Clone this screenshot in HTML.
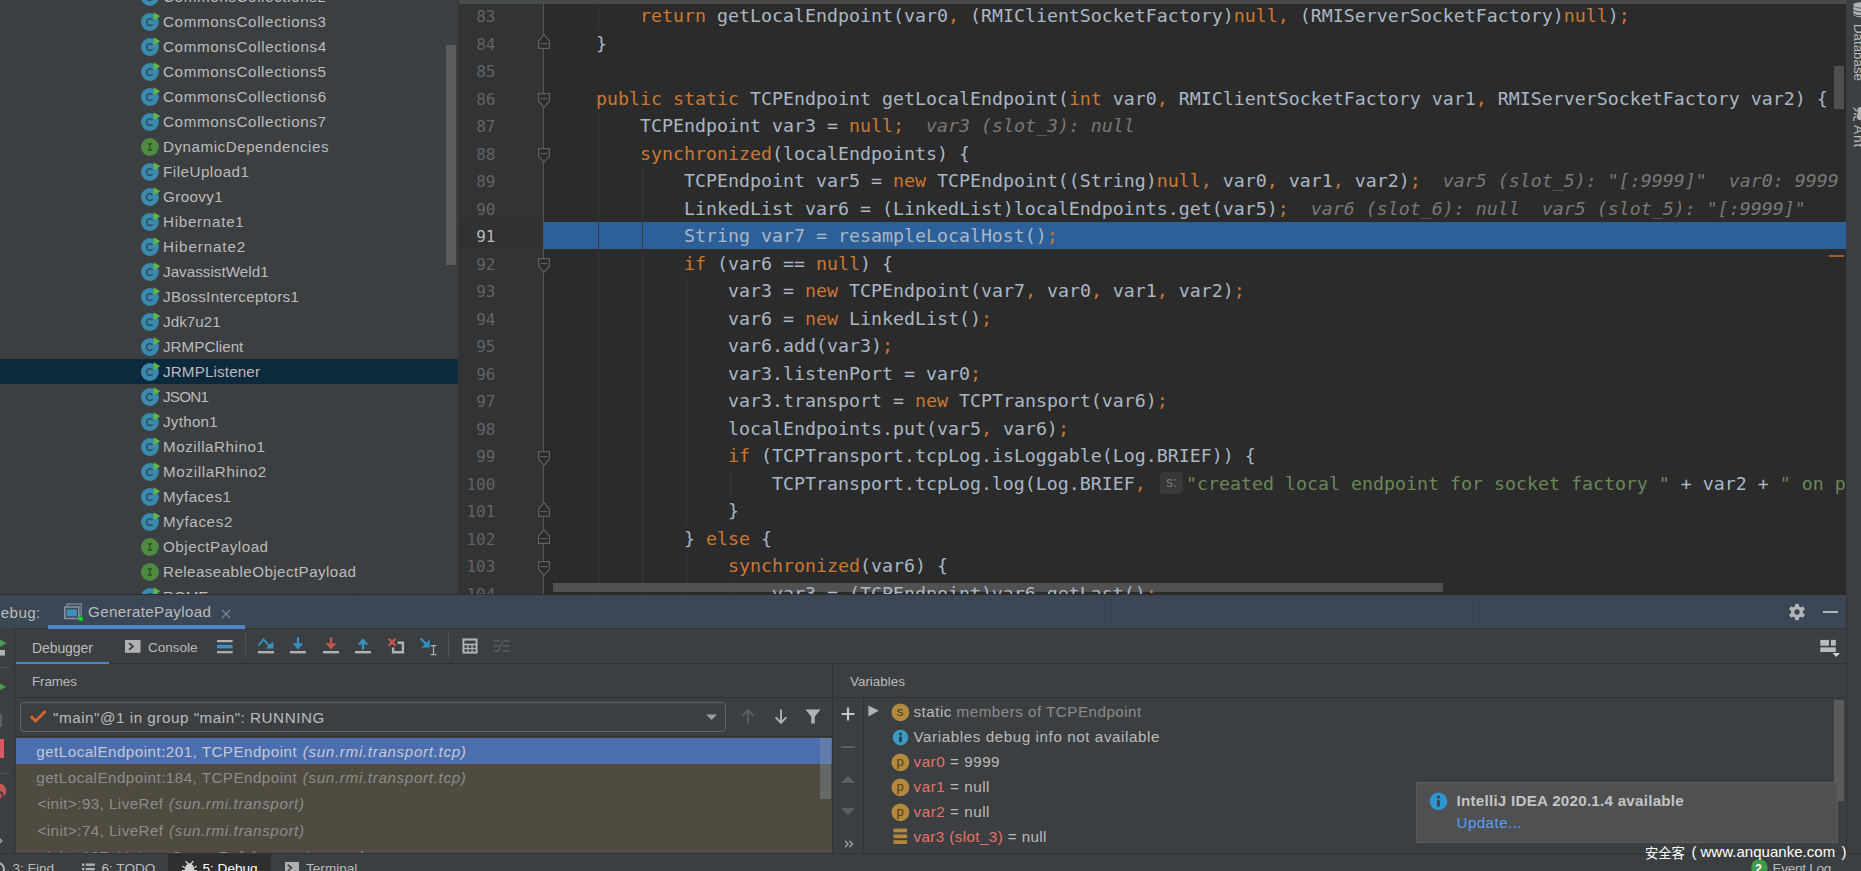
<!DOCTYPE html>
<html><head><meta charset="utf-8"><title>IntelliJ IDEA Debug</title>
<style>
*{box-sizing:border-box;margin:0;padding:0}
html,body{width:1861px;height:871px;overflow:hidden;background:#3c3f41}
body{position:relative;font-family:"Liberation Sans","Noto Sans CJK SC",sans-serif;font-size:15.2px;color:#bbbbbb;-webkit-font-smoothing:antialiased}
.abs{position:absolute}
/* ---------- project tree */
#tree{position:absolute;left:0;top:0;width:458px;height:594px;overflow:hidden;background:#3c3f41}
.tr{position:absolute;left:0;width:458px;height:25px;line-height:25px;white-space:nowrap}
.tr.sel{background:#0d293e}
.tr span{position:absolute;left:163px;top:0.3px;font-size:15.2px}
.ti{position:absolute;left:140px;top:2px}
#tsb{position:absolute;left:446px;top:45px;width:10px;height:220px;background:#595b5d}
/* ---------- editor */
#ed{position:absolute;left:458px;top:0;width:1388px;height:594px;overflow:hidden;background:#2b2b2b}
#gut{position:absolute;left:0;top:0;width:85px;height:594px;background:#313335}
#gline{position:absolute;left:85px;top:0;width:1.3px;height:594px;background:#555555}
#topstrip{position:absolute;left:1px;top:0;width:1387px;height:4px;background:#474b4c;z-index:5}
.cl,.ln,.ih{font-family:"DejaVu Sans Mono","Liberation Mono",monospace;font-size:18.27px}
.cl{position:absolute;left:94px;height:27.5px;line-height:27.5px;white-space:pre;color:#a9b7c6;padding-top:0;z-index:3}
.ln{position:absolute;left:0;width:37.4px;text-align:right;height:27.5px;line-height:27.5px;color:#606366;font-size:16px;padding-top:1px}
.ln.cur{color:#b8b8b8}
.k{color:#cc7832}.s{color:#6a8759}
.ih{color:#787878;font-style:italic}
.exec{position:absolute;left:86px;width:1302px;height:27px;background:#2d6099}
.ig{position:absolute;width:1px;background:#373737;z-index:0}
.fm{position:absolute}
.hint{position:absolute;height:22px;width:23px;border-radius:4px;background:#393939;color:#787878;font-family:"Liberation Sans","Noto Sans CJK SC",sans-serif;font-size:14px;line-height:21px;text-align:center}
#vsb{position:absolute;left:1376px;top:66px;width:10px;height:43px;background:#4f4f4f}
#hsb{position:absolute;left:95px;top:583px;width:890px;height:9px;background:rgba(120,120,120,.5);z-index:1}
#emark{position:absolute;left:1371px;top:255px;width:15px;height:2px;background:#9e5b33}
/* ---------- right strip */
#rs{position:absolute;left:1846px;top:0;width:15px;height:853px;background:#3c3f41;overflow:hidden}
.vt{position:absolute;left:7px;transform-origin:0 0;transform:rotate(90deg);white-space:nowrap;font-size:13.5px;color:#bbbbbb}
/* ---------- debug */
#dh{position:absolute;left:0;top:594px;width:1846px;height:35px;background:#3b4754;border-top:1px solid #2b2b2b;border-bottom:1px solid #323436}
#dtb{position:absolute;left:0;top:628px;width:1846px;height:36px;border-bottom:1px solid #323232}
#lstrip{position:absolute;left:0;top:628px;width:15px;height:225px;border-right:1px solid #2f3133;overflow:hidden;background:#3c3f41;z-index:4}
.sm{font-size:13.6px}
.hline{position:absolute;height:1px;background:#323232}
.vline{position:absolute;width:1px;background:#323232}
#frames{position:absolute;left:16px;top:738px;width:816px;height:115px;background:#4f4b41;overflow:hidden}
.fr{position:absolute;left:0;width:816px;height:26.25px;line-height:26px;white-space:nowrap;color:#8c8c8c;font-size:15.2px}
.fr.sel{background:#4b6eaf;color:#c3cad6}
.fr span{position:absolute;left:20.3px;top:0.8px}
.fr i{margin-left:1px}
.vr{position:absolute;left:864px;width:960px;height:25px;line-height:25px;white-space:nowrap;font-size:15.2px}
.vr span.t{position:absolute;left:49.5px;top:0.3px}
.vn{color:#e6726b}
.dim{color:#8c8c8c}
#note{position:absolute;left:1416px;top:782px;width:422px;height:61px;background:#4e5052;border:1px solid #5a5c5e}
#bs{position:absolute;left:0;top:853px;width:1861px;height:18px;background:#3c3f41;border-top:1px solid #323232;overflow:hidden}
#bs .t{position:absolute;top:6.6px;font-size:13.6px;line-height:16px;white-space:nowrap;color:#bbbbbb}
</style></head><body>

<div id="tree">
<div class="tr" style="top:-16px"><svg class="ti" width="22" height="20" viewBox="0 0 22 20"><circle cx="9.9" cy="11" r="8.9" fill="#3b8aad"/><path d="M12.5 9.2 A3.3 3.3 0 1 0 12.5 13.1" fill="none" stroke="#2c4d60" stroke-width="1.5"/><path d="M13.7 1.3 L20.3 5.3 L13.7 9.3 Z" fill="#5fb83f"/></svg><span style="letter-spacing:0.612px">CommonsCollections2</span></div>
<div class="tr" style="top:9px"><svg class="ti" width="22" height="20" viewBox="0 0 22 20"><circle cx="9.9" cy="11" r="8.9" fill="#3b8aad"/><path d="M12.5 9.2 A3.3 3.3 0 1 0 12.5 13.1" fill="none" stroke="#2c4d60" stroke-width="1.5"/><path d="M13.7 1.3 L20.3 5.3 L13.7 9.3 Z" fill="#5fb83f"/></svg><span style="letter-spacing:0.612px">CommonsCollections3</span></div>
<div class="tr" style="top:34px"><svg class="ti" width="22" height="20" viewBox="0 0 22 20"><circle cx="9.9" cy="11" r="8.9" fill="#3b8aad"/><path d="M12.5 9.2 A3.3 3.3 0 1 0 12.5 13.1" fill="none" stroke="#2c4d60" stroke-width="1.5"/><path d="M13.7 1.3 L20.3 5.3 L13.7 9.3 Z" fill="#5fb83f"/></svg><span style="letter-spacing:0.623px">CommonsCollections4</span></div>
<div class="tr" style="top:59px"><svg class="ti" width="22" height="20" viewBox="0 0 22 20"><circle cx="9.9" cy="11" r="8.9" fill="#3b8aad"/><path d="M12.5 9.2 A3.3 3.3 0 1 0 12.5 13.1" fill="none" stroke="#2c4d60" stroke-width="1.5"/><path d="M13.7 1.3 L20.3 5.3 L13.7 9.3 Z" fill="#5fb83f"/></svg><span style="letter-spacing:0.612px">CommonsCollections5</span></div>
<div class="tr" style="top:84px"><svg class="ti" width="22" height="20" viewBox="0 0 22 20"><circle cx="9.9" cy="11" r="8.9" fill="#3b8aad"/><path d="M12.5 9.2 A3.3 3.3 0 1 0 12.5 13.1" fill="none" stroke="#2c4d60" stroke-width="1.5"/><path d="M13.7 1.3 L20.3 5.3 L13.7 9.3 Z" fill="#5fb83f"/></svg><span style="letter-spacing:0.623px">CommonsCollections6</span></div>
<div class="tr" style="top:109px"><svg class="ti" width="22" height="20" viewBox="0 0 22 20"><circle cx="9.9" cy="11" r="8.9" fill="#3b8aad"/><path d="M12.5 9.2 A3.3 3.3 0 1 0 12.5 13.1" fill="none" stroke="#2c4d60" stroke-width="1.5"/><path d="M13.7 1.3 L20.3 5.3 L13.7 9.3 Z" fill="#5fb83f"/></svg><span style="letter-spacing:0.612px">CommonsCollections7</span></div>
<div class="tr" style="top:134px"><svg class="ti" width="20" height="20" viewBox="0 0 20 20"><circle cx="9.9" cy="11" r="8.95" fill="#4f8a3e"/><path d="M7.8 7.9 H12 M7.8 14.1 H12 M9.9 7.9 V14.1" fill="none" stroke="#2f5a2a" stroke-width="1.7"/></svg><span style="letter-spacing:0.518px">DynamicDependencies</span></div>
<div class="tr" style="top:159px"><svg class="ti" width="22" height="20" viewBox="0 0 22 20"><circle cx="9.9" cy="11" r="8.9" fill="#3b8aad"/><path d="M12.5 9.2 A3.3 3.3 0 1 0 12.5 13.1" fill="none" stroke="#2c4d60" stroke-width="1.5"/><path d="M13.7 1.3 L20.3 5.3 L13.7 9.3 Z" fill="#5fb83f"/></svg><span style="letter-spacing:0.49px">FileUpload1</span></div>
<div class="tr" style="top:184px"><svg class="ti" width="22" height="20" viewBox="0 0 22 20"><circle cx="9.9" cy="11" r="8.9" fill="#3b8aad"/><path d="M12.5 9.2 A3.3 3.3 0 1 0 12.5 13.1" fill="none" stroke="#2c4d60" stroke-width="1.5"/><path d="M13.7 1.3 L20.3 5.3 L13.7 9.3 Z" fill="#5fb83f"/></svg><span style="letter-spacing:0.391px">Groovy1</span></div>
<div class="tr" style="top:209px"><svg class="ti" width="22" height="20" viewBox="0 0 22 20"><circle cx="9.9" cy="11" r="8.9" fill="#3b8aad"/><path d="M12.5 9.2 A3.3 3.3 0 1 0 12.5 13.1" fill="none" stroke="#2c4d60" stroke-width="1.5"/><path d="M13.7 1.3 L20.3 5.3 L13.7 9.3 Z" fill="#5fb83f"/></svg><span style="letter-spacing:0.716px">Hibernate1</span></div>
<div class="tr" style="top:234px"><svg class="ti" width="22" height="20" viewBox="0 0 22 20"><circle cx="9.9" cy="11" r="8.9" fill="#3b8aad"/><path d="M12.5 9.2 A3.3 3.3 0 1 0 12.5 13.1" fill="none" stroke="#2c4d60" stroke-width="1.5"/><path d="M13.7 1.3 L20.3 5.3 L13.7 9.3 Z" fill="#5fb83f"/></svg><span style="letter-spacing:0.883px">Hibernate2</span></div>
<div class="tr" style="top:259px"><svg class="ti" width="22" height="20" viewBox="0 0 22 20"><circle cx="9.9" cy="11" r="8.9" fill="#3b8aad"/><path d="M12.5 9.2 A3.3 3.3 0 1 0 12.5 13.1" fill="none" stroke="#2c4d60" stroke-width="1.5"/><path d="M13.7 1.3 L20.3 5.3 L13.7 9.3 Z" fill="#5fb83f"/></svg><span style="letter-spacing:0.032px">JavassistWeld1</span></div>
<div class="tr" style="top:284px"><svg class="ti" width="22" height="20" viewBox="0 0 22 20"><circle cx="9.9" cy="11" r="8.9" fill="#3b8aad"/><path d="M12.5 9.2 A3.3 3.3 0 1 0 12.5 13.1" fill="none" stroke="#2c4d60" stroke-width="1.5"/><path d="M13.7 1.3 L20.3 5.3 L13.7 9.3 Z" fill="#5fb83f"/></svg><span style="letter-spacing:0.35px">JBossInterceptors1</span></div>
<div class="tr" style="top:309px"><svg class="ti" width="22" height="20" viewBox="0 0 22 20"><circle cx="9.9" cy="11" r="8.9" fill="#3b8aad"/><path d="M12.5 9.2 A3.3 3.3 0 1 0 12.5 13.1" fill="none" stroke="#2c4d60" stroke-width="1.5"/><path d="M13.7 1.3 L20.3 5.3 L13.7 9.3 Z" fill="#5fb83f"/></svg><span style="letter-spacing:0.054px">Jdk7u21</span></div>
<div class="tr" style="top:334px"><svg class="ti" width="22" height="20" viewBox="0 0 22 20"><circle cx="9.9" cy="11" r="8.9" fill="#3b8aad"/><path d="M12.5 9.2 A3.3 3.3 0 1 0 12.5 13.1" fill="none" stroke="#2c4d60" stroke-width="1.5"/><path d="M13.7 1.3 L20.3 5.3 L13.7 9.3 Z" fill="#5fb83f"/></svg><span style="letter-spacing:0.016px">JRMPClient</span></div>
<div class="tr sel" style="top:359px"><svg class="ti" width="22" height="20" viewBox="0 0 22 20"><circle cx="9.9" cy="11" r="8.9" fill="#3b8aad"/><path d="M12.5 9.2 A3.3 3.3 0 1 0 12.5 13.1" fill="none" stroke="#2c4d60" stroke-width="1.5"/><path d="M13.7 1.3 L20.3 5.3 L13.7 9.3 Z" fill="#5fb83f"/></svg><span style="letter-spacing:0.144px">JRMPListener</span></div>
<div class="tr" style="top:384px"><svg class="ti" width="22" height="20" viewBox="0 0 22 20"><circle cx="9.9" cy="11" r="8.9" fill="#3b8aad"/><path d="M12.5 9.2 A3.3 3.3 0 1 0 12.5 13.1" fill="none" stroke="#2c4d60" stroke-width="1.5"/><path d="M13.7 1.3 L20.3 5.3 L13.7 9.3 Z" fill="#5fb83f"/></svg><span style="letter-spacing:-0.751px">JSON1</span></div>
<div class="tr" style="top:409px"><svg class="ti" width="22" height="20" viewBox="0 0 22 20"><circle cx="9.9" cy="11" r="8.9" fill="#3b8aad"/><path d="M12.5 9.2 A3.3 3.3 0 1 0 12.5 13.1" fill="none" stroke="#2c4d60" stroke-width="1.5"/><path d="M13.7 1.3 L20.3 5.3 L13.7 9.3 Z" fill="#5fb83f"/></svg><span style="letter-spacing:0.259px">Jython1</span></div>
<div class="tr" style="top:434px"><svg class="ti" width="22" height="20" viewBox="0 0 22 20"><circle cx="9.9" cy="11" r="8.9" fill="#3b8aad"/><path d="M12.5 9.2 A3.3 3.3 0 1 0 12.5 13.1" fill="none" stroke="#2c4d60" stroke-width="1.5"/><path d="M13.7 1.3 L20.3 5.3 L13.7 9.3 Z" fill="#5fb83f"/></svg><span style="letter-spacing:0.546px">MozillaRhino1</span></div>
<div class="tr" style="top:459px"><svg class="ti" width="22" height="20" viewBox="0 0 22 20"><circle cx="9.9" cy="11" r="8.9" fill="#3b8aad"/><path d="M12.5 9.2 A3.3 3.3 0 1 0 12.5 13.1" fill="none" stroke="#2c4d60" stroke-width="1.5"/><path d="M13.7 1.3 L20.3 5.3 L13.7 9.3 Z" fill="#5fb83f"/></svg><span style="letter-spacing:0.655px">MozillaRhino2</span></div>
<div class="tr" style="top:484px"><svg class="ti" width="22" height="20" viewBox="0 0 22 20"><circle cx="9.9" cy="11" r="8.9" fill="#3b8aad"/><path d="M12.5 9.2 A3.3 3.3 0 1 0 12.5 13.1" fill="none" stroke="#2c4d60" stroke-width="1.5"/><path d="M13.7 1.3 L20.3 5.3 L13.7 9.3 Z" fill="#5fb83f"/></svg><span style="letter-spacing:0.408px">Myfaces1</span></div>
<div class="tr" style="top:509px"><svg class="ti" width="22" height="20" viewBox="0 0 22 20"><circle cx="9.9" cy="11" r="8.9" fill="#3b8aad"/><path d="M12.5 9.2 A3.3 3.3 0 1 0 12.5 13.1" fill="none" stroke="#2c4d60" stroke-width="1.5"/><path d="M13.7 1.3 L20.3 5.3 L13.7 9.3 Z" fill="#5fb83f"/></svg><span style="letter-spacing:0.622px">Myfaces2</span></div>
<div class="tr" style="top:534px"><svg class="ti" width="20" height="20" viewBox="0 0 20 20"><circle cx="9.9" cy="11" r="8.95" fill="#4f8a3e"/><path d="M7.8 7.9 H12 M7.8 14.1 H12 M9.9 7.9 V14.1" fill="none" stroke="#2f5a2a" stroke-width="1.7"/></svg><span style="letter-spacing:0.522px">ObjectPayload</span></div>
<div class="tr" style="top:559px"><svg class="ti" width="20" height="20" viewBox="0 0 20 20"><circle cx="9.9" cy="11" r="8.95" fill="#4f8a3e"/><path d="M7.8 7.9 H12 M7.8 14.1 H12 M9.9 7.9 V14.1" fill="none" stroke="#2f5a2a" stroke-width="1.7"/></svg><span style="letter-spacing:0.428px">ReleaseableObjectPayload</span></div>
<div class="tr" style="top:584px"><svg class="ti" width="22" height="20" viewBox="0 0 22 20"><circle cx="9.9" cy="11" r="8.9" fill="#3b8aad"/><path d="M12.5 9.2 A3.3 3.3 0 1 0 12.5 13.1" fill="none" stroke="#2c4d60" stroke-width="1.5"/><path d="M13.7 1.3 L20.3 5.3 L13.7 9.3 Z" fill="#5fb83f"/></svg><span style="letter-spacing:-0.044px">ROME</span></div>
<div id="tsb"></div>
</div>

<div id="ed">
<div id="gut"></div><div class="abs" style="left:1px;top:222px;width:84px;height:27px;background:#2f3133"></div><div id="gline"></div>
<div class="exec" style="top:222.0px"></div>
<div class="ln" style="top:2.0px">83</div>
<div class="cl" style="top:2.0px">        <span class="k">return</span> getLocalEndpoint(var0<span class="k">,</span> (RMIClientSocketFactory)<span class="k">null</span><span class="k">,</span> (RMIServerSocketFactory)<span class="k">null</span>)<span class="k">;</span></div>
<div class="ln" style="top:29.5px">84</div>
<div class="cl" style="top:29.5px">    }</div>
<div class="ln" style="top:57.0px">85</div>
<div class="cl" style="top:57.0px"></div>
<div class="ln" style="top:84.5px">86</div>
<div class="cl" style="top:84.5px">    <span class="k">public</span> <span class="k">static</span> TCPEndpoint getLocalEndpoint(<span class="k">int</span> var0<span class="k">,</span> RMIClientSocketFactory var1<span class="k">,</span> RMIServerSocketFactory var2) {</div>
<div class="ln" style="top:112.0px">87</div>
<div class="cl" style="top:112.0px">        TCPEndpoint var3 = <span class="k">null</span><span class="k">;</span><span class="ih">  var3 (slot_3): null</span></div>
<div class="ln" style="top:139.5px">88</div>
<div class="cl" style="top:139.5px">        <span class="k">synchronized</span>(localEndpoints) {</div>
<div class="ln" style="top:167.0px">89</div>
<div class="cl" style="top:167.0px">            TCPEndpoint var5 = <span class="k">new</span> TCPEndpoint((String)<span class="k">null</span><span class="k">,</span> var0<span class="k">,</span> var1<span class="k">,</span> var2)<span class="k">;</span><span class="ih">  var5 (slot_5): "[:9999]"  var0: 9999</span></div>
<div class="ln" style="top:194.5px">90</div>
<div class="cl" style="top:194.5px">            LinkedList var6 = (LinkedList)localEndpoints.get(var5)<span class="k">;</span><span class="ih">  var6 (slot_6): null  var5 (slot_5): "[:9999]"</span></div>
<div class="ln cur" style="top:222.0px">91</div>
<div class="cl" style="top:222.0px">            String var7 = resampleLocalHost()<span class="k">;</span></div>
<div class="ln" style="top:249.5px">92</div>
<div class="cl" style="top:249.5px">            <span class="k">if</span> (var6 == <span class="k">null</span>) {</div>
<div class="ln" style="top:277.0px">93</div>
<div class="cl" style="top:277.0px">                var3 = <span class="k">new</span> TCPEndpoint(var7<span class="k">,</span> var0<span class="k">,</span> var1<span class="k">,</span> var2)<span class="k">;</span></div>
<div class="ln" style="top:304.5px">94</div>
<div class="cl" style="top:304.5px">                var6 = <span class="k">new</span> LinkedList()<span class="k">;</span></div>
<div class="ln" style="top:332.0px">95</div>
<div class="cl" style="top:332.0px">                var6.add(var3)<span class="k">;</span></div>
<div class="ln" style="top:359.5px">96</div>
<div class="cl" style="top:359.5px">                var3.listenPort = var0<span class="k">;</span></div>
<div class="ln" style="top:387.0px">97</div>
<div class="cl" style="top:387.0px">                var3.transport = <span class="k">new</span> TCPTransport(var6)<span class="k">;</span></div>
<div class="ln" style="top:414.5px">98</div>
<div class="cl" style="top:414.5px">                localEndpoints.put(var5<span class="k">,</span> var6)<span class="k">;</span></div>
<div class="ln" style="top:442.0px">99</div>
<div class="cl" style="top:442.0px">                <span class="k">if</span> (TCPTransport.tcpLog.isLoggable(Log.BRIEF)) {</div>
<div class="ln" style="top:469.5px">100</div>
<div class="cl" style="top:469.5px">                    TCPTransport.tcpLog.log(Log.BRIEF<span class="k">,</span> </div>
<div class="hint" style="top:472.0px;left:702px">s:</div>
<div class="cl" style="top:469.5px;left:728px"><span class="s">"created local endpoint for socket factory "</span> + var2 + <span class="s">" on port "</span></div>
<div class="ln" style="top:497.0px">101</div>
<div class="cl" style="top:497.0px">                }</div>
<div class="ln" style="top:524.5px">102</div>
<div class="cl" style="top:524.5px">            } <span class="k">else</span> {</div>
<div class="ln" style="top:552.0px">103</div>
<div class="cl" style="top:552.0px">                <span class="k">synchronized</span>(var6) {</div>
<div class="ln" style="top:579.5px">104</div>
<div class="cl" style="top:579.5px">                    var3 = (TCPEndpoint)var6.getLast()<span class="k">;</span></div>
<div class="ig" style="left:140px;top:2.0px;height:27.5px"></div>
<div class="ig" style="left:140px;top:112.0px;height:495.0px"></div>
<div class="ig" style="left:184px;top:167.0px;height:440.0px"></div>
<div class="ig" style="left:228px;top:277.0px;height:247.5px"></div>
<div class="ig" style="left:272px;top:469.5px;height:27.5px"></div>
<div class="ig" style="left:228px;top:552.0px;height:55.0px"></div>
<div class="ig" style="left:272px;top:579.5px;height:27.5px"></div>
<svg class="fm" style="left:80px;top:34.0px" width="12" height="15" viewBox="0 0 12 15"><path d="M0.6 14.4 H11.4 V7 L6 0.6 L0.6 7 Z" fill="#2b2b2b" stroke="#606060" stroke-width="1.2"/><path d="M2.5 9.6 H9.5" stroke="#606060" stroke-width="1.2"/></svg>
<svg class="fm" style="left:80px;top:93.0px" width="12" height="15" viewBox="0 0 12 15"><path d="M0.6 0.6 H11.4 V8 L6 14.4 L0.6 8 Z" fill="#2b2b2b" stroke="#606060" stroke-width="1.2"/><path d="M2.5 5.6 H9.5" stroke="#606060" stroke-width="1.2"/></svg>
<svg class="fm" style="left:80px;top:148.0px" width="12" height="15" viewBox="0 0 12 15"><path d="M0.6 0.6 H11.4 V8 L6 14.4 L0.6 8 Z" fill="#2b2b2b" stroke="#606060" stroke-width="1.2"/><path d="M2.5 5.6 H9.5" stroke="#606060" stroke-width="1.2"/></svg>
<svg class="fm" style="left:80px;top:258.0px" width="12" height="15" viewBox="0 0 12 15"><path d="M0.6 0.6 H11.4 V8 L6 14.4 L0.6 8 Z" fill="#2b2b2b" stroke="#606060" stroke-width="1.2"/><path d="M2.5 5.6 H9.5" stroke="#606060" stroke-width="1.2"/></svg>
<svg class="fm" style="left:80px;top:450.5px" width="12" height="15" viewBox="0 0 12 15"><path d="M0.6 0.6 H11.4 V8 L6 14.4 L0.6 8 Z" fill="#2b2b2b" stroke="#606060" stroke-width="1.2"/><path d="M2.5 5.6 H9.5" stroke="#606060" stroke-width="1.2"/></svg>
<svg class="fm" style="left:80px;top:501.5px" width="12" height="15" viewBox="0 0 12 15"><path d="M0.6 14.4 H11.4 V7 L6 0.6 L0.6 7 Z" fill="#2b2b2b" stroke="#606060" stroke-width="1.2"/><path d="M2.5 9.6 H9.5" stroke="#606060" stroke-width="1.2"/></svg>
<svg class="fm" style="left:80px;top:529.0px" width="12" height="15" viewBox="0 0 12 15"><path d="M0.6 14.4 H11.4 V7 L6 0.6 L0.6 7 Z" fill="#2b2b2b" stroke="#606060" stroke-width="1.2"/><path d="M2.5 9.6 H9.5" stroke="#606060" stroke-width="1.2"/></svg>
<svg class="fm" style="left:80px;top:560.5px" width="12" height="15" viewBox="0 0 12 15"><path d="M0.6 0.6 H11.4 V8 L6 14.4 L0.6 8 Z" fill="#2b2b2b" stroke="#606060" stroke-width="1.2"/><path d="M2.5 5.6 H9.5" stroke="#606060" stroke-width="1.2"/></svg>
<div id="hsb"></div>
<div id="vsb"></div>
<div id="emark"></div>
<div id="topstrip"></div>
</div>

<div id="rs">
<svg class="abs" style="left:6.6px;top:2px" width="15" height="16" viewBox="0 0 15 16"><g fill="#afb1b3"><ellipse cx="7.3" cy="3" rx="7" ry="2.7"/><path d="M0.3 4.6 Q7.3 8.6 14.3 4.6 V7.4 Q7.3 11.4 0.3 7.4 Z"/><path d="M0.3 8.6 Q7.3 12.6 14.3 8.6 V11.2 Q7.3 15.2 0.3 11.2 Z"/><path d="M0.3 12.2 Q7.3 16.2 14.3 12.2 V13 Q7.3 17.6 0.3 13 Z"/></g></svg>
<div class="vt" style="top:23.6px;left:19.6px;font-size:13.3px">Database</div>
<svg class="abs" style="left:7.4px;top:105.5px" width="10" height="16" viewBox="0 0 10 16"><g stroke="#afb1b3" stroke-width="1.3" fill="none"><path d="M0.6 1.6 L3.6 5.4 M0.8 8 H3.6 M3.4 10.4 L0.8 11.6 V15"/></g><ellipse cx="7.6" cy="4.2" rx="3.4" ry="3.2" fill="#afb1b3"/><ellipse cx="7.8" cy="10.4" rx="4" ry="3.8" fill="#afb1b3"/></svg>
<div class="vt" style="top:124.6px;left:19.6px;font-size:13.6px;letter-spacing:.9px">Ant</div>
</div>

<!-- debug header -->
<div id="dh">
<div class="abs" id="dbgt" style="right:1805.3px;top:6.6px;line-height:22px;white-space:nowrap;letter-spacing:.4px">Debug:</div>
<svg class="abs" style="left:64px;top:8px" width="20" height="19" viewBox="0 0 20 19"><rect x="3.2" y="1" width="14" height="11" fill="none" stroke="#7f8b98" stroke-width="1.3"/><rect x="0.8" y="4" width="14" height="11.5" fill="#3b4754" stroke="#8a96a3" stroke-width="1.5"/><rect x="2.7" y="6.3" width="10.2" height="7" fill="#3d8fb8"/><circle cx="16.8" cy="15.7" r="2.3" fill="#00e000"/></svg>
<div class="abs" style="left:88px;top:6.3px;line-height:22px;white-space:nowrap;letter-spacing:0.339px">GeneratePayload</div>
<svg class="abs" style="left:221px;top:14px" width="10" height="10" viewBox="0 0 10 10"><path d="M1 1 L9 9 M9 1 L1 9" stroke="#7a8591" stroke-width="1.2"/></svg>
<div class="abs" style="left:48px;top:30px;width:197px;height:3.8px;background:#4a88c7"></div>
<div class="vline" style="left:354px;top:0;height:33px;background:#364250"></div><div class="vline" style="left:730px;top:0;height:33px;background:#364250"></div><div class="vline" style="left:1104px;top:0;height:33px;background:#364250"></div><div class="vline" style="left:1479px;top:0;height:33px;background:#364250"></div>
<!-- gear -->
<svg class="abs" style="left:1788px;top:8px" width="18" height="18" viewBox="0 0 18 18"><g fill="#b4b7ba"><circle cx="9" cy="9" r="6"/><rect x="7.1" y="0.9" width="3.8" height="16.2"/><rect x="7.1" y="0.9" width="3.8" height="16.2" transform="rotate(60 9 9)"/><rect x="7.1" y="0.9" width="3.8" height="16.2" transform="rotate(120 9 9)"/></g><circle cx="9" cy="9" r="2.7" fill="#3b4754"/></svg>
<div class="abs" style="left:1822.5px;top:16px;width:15px;height:2px;background:#b4b7ba"></div>
</div>

<!-- debug toolbar row -->
<div id="dtb">
<div class="abs sm" style="left:32px;top:9.7px;line-height:20px;letter-spacing:-.1px;font-size:14px">Debugger</div>
<div class="abs" style="left:16px;top:33.5px;width:93px;height:2.6px;background:#4a88c7"></div>
<svg class="abs" style="left:125px;top:12px" width="16" height="13" viewBox="0 0 16 13"><rect x="0" y="0" width="15.5" height="12.8" fill="#afb1b3"/><path d="M4 3 L8 6.4 L4 9.8" stroke="#3c3f41" stroke-width="1.8" fill="none"/></svg>
<div class="abs sm" style="left:148px;top:9.7px;line-height:20px;letter-spacing:-.05px">Console</div>
<svg class="abs" style="left:217px;top:11px" width="16" height="15" viewBox="0 0 16 15"><rect x="0" y="1" width="15.6" height="2.2" fill="#afb1b3"/><rect x="0" y="5.8" width="15.6" height="3.6" fill="#3592c4"/><rect x="0" y="12.1" width="15.6" height="2.2" fill="#afb1b3"/></svg>
<div class="vline" style="left:245px;top:5px;height:25px;background:#515456"></div>
<!-- step over -->
<svg class="abs" style="left:257px;top:9px" width="18" height="18" viewBox="0 0 18 18"><path d="M1.5 8.5 L6.5 2.5 L13 9.5" fill="none" stroke="#3592c4" stroke-width="1.9"/><path d="M16.3 4.2 V11.6 H9 Z" fill="#3592c4"/><rect x="1" y="14" width="16" height="2.4" fill="#afb1b3"/></svg>
<!-- step into -->
<svg class="abs" style="left:289px;top:9px" width="18" height="18" viewBox="0 0 18 18"><path d="M9 0.2 V7" stroke="#3592c4" stroke-width="2.2"/><path d="M3.6 6.2 H14.4 L9 12.4 Z" fill="#3592c4"/><rect x="1" y="14" width="16" height="2.4" fill="#afb1b3"/></svg>
<!-- force step into -->
<svg class="abs" style="left:322px;top:9px" width="18" height="18" viewBox="0 0 18 18"><path d="M9 0.2 V7" stroke="#c75450" stroke-width="2.2"/><path d="M3.6 6.2 H14.4 L9 12.4 Z" fill="#c75450"/><rect x="1" y="14" width="16" height="2.4" fill="#afb1b3"/></svg>
<!-- step out -->
<svg class="abs" style="left:354px;top:9px" width="18" height="18" viewBox="0 0 18 18"><path d="M9 6 V12.6" stroke="#3592c4" stroke-width="2.2"/><path d="M3.6 7.6 H14.4 L9 1.2 Z" fill="#3592c4"/><rect x="1" y="14" width="16" height="2.4" fill="#afb1b3"/></svg>
<!-- drop frame -->
<svg class="abs" style="left:387px;top:9px" width="18" height="18" viewBox="0 0 18 18"><path d="M1.6 1.8 L8.6 8.8 M8.6 1.8 L1.6 8.8" stroke="#c75450" stroke-width="2.3"/><path d="M10.5 5.8 H15.9 V15.3 H6.1 V10.6" fill="none" stroke="#afb1b3" stroke-width="2.4"/></svg>
<!-- run to cursor -->
<svg class="abs" style="left:419px;top:9px" width="20" height="19" viewBox="0 0 20 19"><path d="M1.5 1.5 L8 8" stroke="#3592c4" stroke-width="2.2"/><path d="M10.6 2.6 V10.6 H2.6 Z" fill="#3592c4"/><path d="M11.6 8.6 H17.4 M11.6 17.6 H17.4 M14.5 8.6 V17.6" stroke="#afb1b3" stroke-width="1.2" fill="none"/></svg>
<div class="vline" style="left:448px;top:5px;height:25px;background:#515456"></div>
<!-- calculator -->
<svg class="abs" style="left:462px;top:9.5px" width="16" height="16" viewBox="0 0 16 16"><rect x="0.4" y="0.4" width="15.2" height="15.2" fill="#afb1b3"/><rect x="2.4" y="2.6" width="11.2" height="3" fill="#3c3f41"/><g fill="#3c3f41"><rect x="2.4" y="7.4" width="2.9" height="2.4"/><rect x="6.55" y="7.4" width="2.9" height="2.4"/><rect x="10.7" y="7.4" width="2.9" height="2.4"/><rect x="2.4" y="11.2" width="2.9" height="2.4"/><rect x="6.55" y="11.2" width="2.9" height="2.4"/><rect x="10.7" y="11.2" width="2.9" height="2.4"/></g></svg>
<!-- trace (disabled) -->
<svg class="abs" style="left:494px;top:11px" width="16" height="14" viewBox="0 0 16 14"><g stroke="#5a5d5f" stroke-width="1.5" fill="none"><path d="M0 2 H6 M10 2 H16 M0 7 H5 M9 7 H16 M0 12 H4 M9 12 H16"/><path d="M4 12 C7 12 6 2 10 2"/></g></svg>
<!-- layout icon right -->
<svg class="abs" style="left:1819px;top:11px" width="22" height="19" viewBox="0 0 22 19"><g fill="#b9bcbf"><rect x="1.3" y="0.9" width="8.6" height="5.8"/><rect x="11.9" y="0.9" width="4.9" height="5.8"/><rect x="1.3" y="8.4" width="15.5" height="4.6"/><path d="M13.6 14 H20.9 L17.25 18 Z" fill="#d5d7d9"/></g></svg>
</div>

<!-- left strip of debug -->
<div id="lstrip">
<svg class="abs" style="left:-10px;top:8px" width="18" height="20" viewBox="0 0 18 20"><path d="M4 -0.5 L16.3 7.2 L4 14.6 Z" fill="#499c54"/><rect x="9" y="14" width="6" height="5.6" fill="#afb1b3"/></svg>
<div class="hline" style="left:0;top:39px;width:9px;background:#515456"></div>
<svg class="abs" style="left:-10px;top:52px" width="18" height="14" viewBox="0 0 18 14"><path d="M4 0.6 L16.3 6.8 L4 13 Z" fill="#499c54"/></svg>
<div class="abs" style="left:0;top:86px;width:2.4px;height:13px;background:#5e6062"></div>
<div class="abs" style="left:0;top:110.5px;width:3.5px;height:19.5px;background:#db5860"></div>
<div class="hline" style="left:0;top:145px;width:9px;background:#515456"></div>
<svg class="abs" style="left:-12px;top:152px" width="20" height="24" viewBox="0 0 20 24"><circle cx="10.5" cy="11" r="7.7" fill="#c75450"/><circle cx="11" cy="15.6" r="4.7" fill="#3c3f41"/><circle cx="11" cy="16.2" r="2.7" fill="#c75450"/></svg>
<svg class="abs" style="left:-6.5px;top:209px" width="9" height="8" viewBox="0 0 9 8"><path d="M5 1.2 L7.8 4 L5 6.8" fill="none" stroke="#afb1b3" stroke-width="1.2"/></svg>
</div>

<!-- frames + variables headers -->
<div class="abs sm" style="left:32px;top:671.7px;line-height:20px;letter-spacing:-.1px;font-size:13.4px">Frames</div>
<div class="abs sm" style="left:850px;top:671.7px;line-height:20px;letter-spacing:0;font-size:13.4px">Variables</div>
<div class="hline" style="left:15px;top:696.5px;width:1831px"></div>
<div class="vline" style="left:832px;top:664px;height:189px"></div>
<div class="vline" style="left:863px;top:697px;height:156px"></div>

<!-- thread dropdown -->
<div class="abs" style="left:19.5px;top:701.8px;width:706.5px;height:30px;border:1.5px solid #616364;border-radius:4px;background:#3c3f41"></div>
<svg class="abs" style="left:29px;top:708px" width="19" height="17" viewBox="0 0 19 17"><path d="M2 8.4 L6.6 13 L16.6 3" fill="none" stroke="#d2662c" stroke-width="3"/></svg>
<div class="abs" style="left:53.1px;top:707.3px;line-height:22px;white-space:nowrap;letter-spacing:0.538px">"main"@1 in group "main": RUNNING</div>
<svg class="abs" style="left:706px;top:714px" width="11" height="7" viewBox="0 0 11 7"><path d="M0 0.4 H11 L5.5 6 Z" fill="#9a9da0"/></svg>
<!-- up / down / filter -->
<svg class="abs" style="left:740px;top:708px" width="16" height="17" viewBox="0 0 16 17"><path d="M8 15.6 V2.6 M2.6 7.8 L8 2.2 L13.4 7.8" fill="none" stroke="#5c5f61" stroke-width="1.9"/></svg>
<svg class="abs" style="left:773px;top:708px" width="16" height="17" viewBox="0 0 16 17"><path d="M8 1.4 V14.4 M2.6 9.2 L8 14.8 L13.4 9.2" fill="none" stroke="#afb1b3" stroke-width="1.9"/></svg>
<svg class="abs" style="left:805px;top:709px" width="16" height="15" viewBox="0 0 16 15"><path d="M0.4 0.4 H15.6 L9.8 7.4 V14.6 H6.2 V7.4 Z" fill="#afb1b3"/></svg>

<div class="hline" style="left:15px;top:736.3px;width:817px"></div>
<!-- frames list -->
<div id="frames">
<div class="fr sel" style="top:0"><span style="letter-spacing:0.466px">getLocalEndpoint:201, TCPEndpoint <i style="letter-spacing:0.66px">(sun.rmi.transport.tcp)</i></span></div>
<div class="fr" style="top:26.25px"><span style="letter-spacing:0.466px">getLocalEndpoint:184, TCPEndpoint <i style="letter-spacing:0.66px">(sun.rmi.transport.tcp)</i></span></div>
<div class="fr" style="top:52.5px"><span style="left:21.5px;letter-spacing:0.431px">&lt;init&gt;:93, LiveRef <i style="letter-spacing:0.6px">(sun.rmi.transport)</i></span></div>
<div class="fr" style="top:78.75px"><span style="left:21.5px;letter-spacing:0.431px">&lt;init&gt;:74, LiveRef <i style="letter-spacing:0.6px">(sun.rmi.transport)</i></span></div>
<div class="fr" style="top:105px"><span style="left:21.5px;letter-spacing:0.431px">&lt;init&gt;:167, UnicastServerRef <i style="letter-spacing:0.6px">(sun.rmi.server)</i></span></div>
<div class="abs" style="left:804px;top:0;width:11px;height:61px;background:rgba(140,150,165,.38)"></div>
</div>

<!-- variables side toolbar -->
<svg class="abs" style="left:840px;top:706px" width="16" height="16" viewBox="0 0 16 16"><path d="M8 1.6 V14.4 M1.6 8 H14.4" stroke="#c5c8cb" stroke-width="2.2"/></svg>
<div class="abs" style="left:841px;top:746px;width:14px;height:2px;background:#5c5f61"></div>
<svg class="abs" style="left:841px;top:775px" width="14" height="8" viewBox="0 0 14 8"><path d="M0 8 H14 L7 0.6 Z" fill="#5c5f61"/></svg>
<svg class="abs" style="left:841px;top:808px" width="14" height="8" viewBox="0 0 14 8"><path d="M0 0 H14 L7 7.4 Z" fill="#5c5f61"/></svg>
<svg class="abs" style="left:844px;top:840px" width="10" height="8" viewBox="0 0 10 8"><path d="M1 0.8 L4.2 4 L1 7.2 M5.4 0.8 L8.6 4 L5.4 7.2" fill="none" stroke="#afb1b3" stroke-width="1.2"/></svg>

<!-- variables rows -->
<div class="vr" style="top:698.8px">
<svg class="abs" style="left:3.5px;top:6px" width="12" height="12" viewBox="0 0 12 12"><path d="M0.4 0.4 L10.8 5.8 L0.4 11.4 Z" fill="#afb1b3"/></svg>
<svg class="abs" style="left:26.5px;top:4.2px" width="19" height="19" viewBox="0 0 19 19"><circle cx="9.4" cy="9.3" r="8.9" fill="#b2893f"/></svg><span class="abs" style="left:32.7px;top:0.2px;font-size:13.5px;color:#4d3c1b">s</span>
<span class="t" style="letter-spacing:0.487px">static <span class="dim">members of TCPEndpoint</span></span></div>
<div class="vr" style="top:723.8px">
<svg class="abs" style="left:26.5px;top:4.2px" width="19" height="19" viewBox="0 0 19 19"><circle cx="9.5" cy="9.5" r="7.8" fill="#3b9ac4"/><rect x="8.2" y="8.6" width="2.6" height="5.6" fill="#26383f"/><circle cx="9.5" cy="5.9" r="1.5" fill="#26383f"/></svg>
<span class="t" style="letter-spacing:0.579px">Variables debug info not available</span></div>
<div class="vr" style="top:748.8px">
<svg class="abs" style="left:26.5px;top:4.2px" width="19" height="19" viewBox="0 0 19 19"><circle cx="9.4" cy="9.3" r="8.9" fill="#b2893f"/></svg><span class="abs" style="left:32.5px;top:0.2px;font-size:13px;color:#4d3c1b">p</span>
<span class="t" style="letter-spacing:0.541px"><span class="vn">var0</span> = 9999</span></div>
<div class="vr" style="top:773.8px">
<svg class="abs" style="left:26.5px;top:4.2px" width="19" height="19" viewBox="0 0 19 19"><circle cx="9.4" cy="9.3" r="8.9" fill="#b2893f"/></svg><span class="abs" style="left:32.5px;top:0.2px;font-size:13px;color:#4d3c1b">p</span>
<span class="t" style="letter-spacing:0.548px"><span class="vn">var1</span> = null</span></div>
<div class="vr" style="top:798.8px">
<svg class="abs" style="left:26.5px;top:4.2px" width="19" height="19" viewBox="0 0 19 19"><circle cx="9.4" cy="9.3" r="8.9" fill="#b2893f"/></svg><span class="abs" style="left:32.5px;top:0.2px;font-size:13px;color:#4d3c1b">p</span>
<span class="t" style="letter-spacing:0.548px"><span class="vn">var2</span> = null</span></div>
<div class="vr" style="top:823.8px">
<svg class="abs" style="left:29px;top:4.5px" width="15" height="17" viewBox="0 0 15 17"><rect x="0.5" y="0.6" width="13.6" height="3.8" fill="#b2893f"/><rect x="0.5" y="6.4" width="13.6" height="3.8" fill="#b2893f"/><rect x="0.5" y="12.2" width="13.6" height="3.8" fill="#b2893f"/></svg>
<span class="t" style="letter-spacing:0.401px"><span class="vn">var3 (slot_3)</span> = null</span></div>
<div class="abs" style="left:1834px;top:700px;width:9.5px;height:101px;background:#595b5d"></div>

<div class="vline" style="left:1846px;top:594px;height:259px;background:#323232"></div>
<!-- notification -->
<div id="note">
<svg class="abs" style="left:11.5px;top:8.5px" width="19" height="19" viewBox="0 0 19 19"><circle cx="9.4" cy="9.3" r="8.8" fill="#2e95cf"/><rect x="8.1" y="7.8" width="2.7" height="6.8" fill="#3c4348"/><circle cx="9.45" cy="5.1" r="1.65" fill="#3c4348"/></svg>
<div class="abs" style="left:39.5px;top:7.4px;line-height:22px;font-weight:bold;font-size:15.2px;letter-spacing:0.242px;white-space:nowrap;color:#c4c4c4">IntelliJ IDEA 2020.1.4 available</div>
<div class="abs" style="left:39.5px;top:29.3px;line-height:22px;white-space:nowrap;letter-spacing:.42px;color:#589df6">Update...</div>
</div>

<!-- bottom strip -->
<div id="bs">
<svg class="abs" style="left:-10px;top:7px" width="16" height="16" viewBox="0 0 16 16"><circle cx="8" cy="8" r="6" fill="none" stroke="#afb1b3" stroke-width="2"/></svg>
<div class="t" style="left:12.5px">3: Find</div>
<svg class="abs" style="left:82px;top:8.5px" width="13" height="12" viewBox="0 0 13 12"><g fill="#afb1b3"><rect x="0" y="0.5" width="2.4" height="2.4"/><rect x="3.8" y="0.5" width="9" height="2.4"/><rect x="0" y="4.9" width="2.4" height="2.4"/><rect x="3.8" y="4.9" width="9" height="2.4"/><rect x="0" y="9.3" width="2.4" height="2.4"/><rect x="3.8" y="9.3" width="9" height="2.4"/></g></svg>
<div class="t" style="left:101.5px">6: TODO</div>
<div class="abs" style="left:167.5px;top:0;width:103.5px;height:18px;background:#2d2f30"></div>
<svg class="abs" style="left:182px;top:6px" width="15" height="16" viewBox="0 0 15 16"><g fill="#d0d2d4"><ellipse cx="7.5" cy="9.5" rx="4.6" ry="6"/><path d="M3.2 1.6 L6 5 H9 L11.8 1.6 L10.6 0.8 L8.4 3.6 H6.6 L4.4 0.8 Z"/><path d="M0.4 5.6 L3.6 7.4 L3 8.6 L0 6.8 Z M14.6 5.6 L11.4 7.4 L12 8.6 L15 6.8 Z"/><rect x="0" y="10" width="15" height="1.5"/></g></svg>
<div class="t" style="left:202.5px;color:#ffffff">5: Debug</div>
<svg class="abs" style="left:285px;top:8px" width="14" height="12" viewBox="0 0 14 12"><rect x="0" y="0" width="14" height="12" fill="#afb1b3"/><path d="M2.6 2.6 L6.4 5.8 L2.6 9" stroke="#3c3f41" stroke-width="1.6" fill="none"/><rect x="7" y="9" width="4.6" height="1.5" fill="#3c3f41"/></svg>
<div class="t" style="left:306px">Terminal</div>
<svg class="abs" style="left:1750.5px;top:5px" width="17" height="17" viewBox="0 0 17 17"><circle cx="8.4" cy="8.4" r="8.2" fill="#3f9b4a"/></svg>
<div class="t" style="left:1755.3px;color:#fff;font-size:12px;font-weight:bold;top:6.5px">2</div>
<div class="t" style="left:1772.5px;letter-spacing:-.3px">Event Log</div>
</div>

<!-- watermark -->
<div class="abs" style="left:1645px;top:841.5px;line-height:22px;font-size:13.3px;color:#ffffff;white-space:nowrap;font-family:'Noto Sans CJK SC','Liberation Sans',sans-serif">安全客</div>
<div class="abs" style="left:1691.5px;top:841px;line-height:22px;font-size:15px;color:#ffffff;white-space:nowrap">(</div>
<div class="abs" style="left:1700.5px;top:841px;line-height:22px;font-size:15px;color:#ffffff;white-space:nowrap;letter-spacing:.03px">www.anquanke.com</div>
<div class="abs" style="left:1841.5px;top:841px;line-height:22px;font-size:15px;color:#ffffff;white-space:nowrap">)</div>

</body></html>
